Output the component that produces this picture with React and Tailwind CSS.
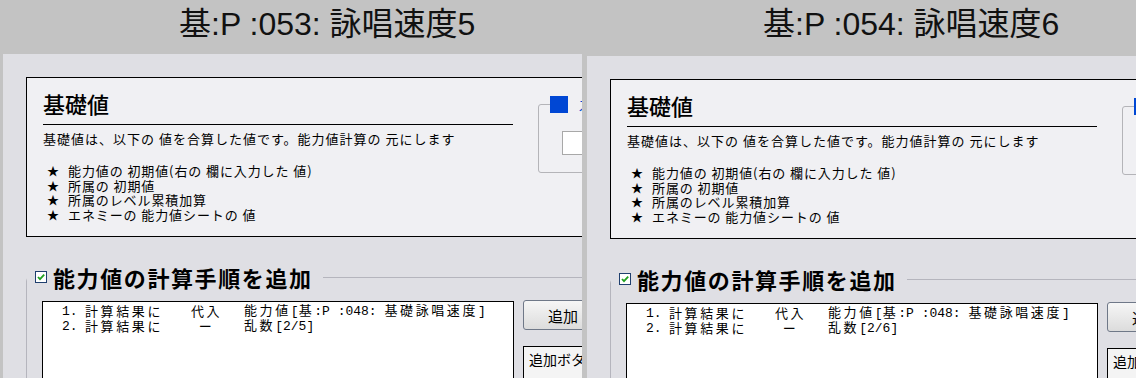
import React from "react";

const JP = "font-['Noto_Sans_CJK_JP',sans-serif]";

// split a string into ascii / wide runs so the list box looks fixed-width
function Mono({ text }) {
  const runs = [];
  for (const ch of text) {
    const ascii = ch.charCodeAt(0) < 128;
    const last = runs[runs.length - 1];
    if (last && last.ascii === ascii) last.s += ch;
    else runs.push({ ascii, s: ch });
  }
  return runs.map((r, i) =>
    r.ascii ? (
      <span key={i} className="font-['Liberation_Mono',monospace] whitespace-pre">
        {r.s}
      </span>
    ) : (
      <span key={i} className="tracking-[2.6px]">
        {r.s}
      </span>
    )
  );
}

function Step({ num, target, op, value }) {
  return (
    <div className="flex h-[15px] items-center whitespace-nowrap pl-[19px] text-[13px] leading-[15px]">
      <span className="w-[23px] shrink-0">
        <Mono text={num} />
      </span>
      <span className="w-[104px] shrink-0">
        <Mono text={target} />
      </span>
      <span className="w-[33px] shrink-0 pl-[2px] text-center">
        <Mono text={op} />
      </span>
      <span className="ml-[22px]">
        <Mono text={value} />
      </span>
    </div>
  );
}

function CheckBox() {
  return (
    <svg width="12" height="12" viewBox="0 0 12 12" className="shrink-0">
      <rect x="0.5" y="0.5" width="11" height="11" fill="#fff" stroke="#1f3f6e" />
      <path d="M3 6 L5 8.2 L9.2 3.6" fill="none" stroke="#21a121" strokeWidth="1.8" />
    </svg>
  );
}

function Panel({ title, max, titleH }) {
  return (
    <div className="flex h-full flex-col">
      <div className={`${titleH} shrink-0 pt-[8px]`}>
        <div className="pl-[176px] whitespace-nowrap text-[32px] leading-[32px] text-[#111] font-['Liberation_Sans','Noto_Sans_CJK_JP',sans-serif]">
          {title}
        </div>
      </div>
      <div className={`flex-1 overflow-hidden bg-[#dfdfe4] pl-[23px] pt-[23px] text-black ${JP}`}>
        {/* 基礎値 box */}
        <div className="flex h-[160px] w-[640px] border border-black bg-[#f0f0f3]">
          <div className="ml-[16px] w-[470px] shrink-0">
            <div className="border-b border-black pb-[8px] pt-[12px] text-[22px] font-medium leading-[26px]">
              基礎値
            </div>
            <p className="mt-[6px] whitespace-nowrap text-[13px] leading-[15px] tracking-[1px]">
              基礎値は、以下の 値を合算した値です。能力値計算の 元にします
            </p>
            <ul className="mt-[18px] text-[13px] leading-[14.5px]">
              {[
                "能力値の 初期値(右の 欄に入力した 値)",
                "所属の 初期値",
                "所属のレベル累積加算",
                "エネミーの 能力値シートの 値",
              ].map((t) => (
                <li key={t} className="flex whitespace-nowrap">
                  <span className="ml-[4px] w-[21px] text-[12px]">★</span>
                  <span className="tracking-[0.9px]">{t}</span>
                </li>
              ))}
            </ul>
          </div>
          <fieldset className="ml-[25px] mt-[18px] h-[77px] w-[120px] shrink-0 rounded-[3px] border border-[#b4b4b8]">
            <legend className="ml-[11px] flex items-center pr-[4px]">
              <span className="block h-[17px] w-[18px] bg-[#0047d4]" />
              <span className="ml-[10px] text-[13px] leading-[17px] text-[#0047d4]">スキル</span>
            </legend>
            <div className="ml-[23px] mt-[18px] h-[24px] w-[90px] border border-[#a8a8a8] bg-white" />
          </fieldset>
        </div>

        {/* 計算手順 */}
        <fieldset className="mt-[26px] w-[640px] rounded-tl-[4px] border border-[#b5b5bd] pb-[40px]">
          <legend className="flex items-center pl-[8px] pr-[10px]">
            <CheckBox />
            <span className="ml-[6px] text-[22px] font-bold leading-[28px] tracking-[1.6px]">
              能力値の計算手順を追加
            </span>
          </legend>
          <div className="flex items-start">
            <div className="ml-[15px] mt-[10px] h-[100px] w-[472px] shrink-0 border border-black bg-white pt-[1px]">
              <Step num="1." target="計算結果に" op="代入" value="能力値[基:P :048: 基礎詠唱速度]" />
              <Step num="2." target="計算結果に" op="ー" value={`乱数[2/${max}]`} />
            </div>
            <div className="ml-[9px] mt-[9px] shrink-0">
              <button className="flex h-[30px] w-[80px] items-center justify-center rounded-[3px] border border-[#6f7888] bg-gradient-to-b from-[#f6f6f6] to-[#dcdcdc] text-[15px] leading-none">
                追加
              </button>
              <div className="mt-[16px] h-[40px] w-[120px] border border-black bg-[#f4f4f4] pl-[5px] pt-[3px] text-[14px] leading-[18px] whitespace-nowrap">
                追加ボタンを押すと
              </div>
            </div>
          </div>
        </fieldset>
      </div>
    </div>
  );
}

export default function App() {
  return (
    <div className="flex h-[378px] w-[1136px] overflow-hidden bg-[#c3c3c3] pl-[3px]">
      <div className="h-full w-[579px] shrink-0">
        <Panel title="基:P :053: 詠唱速度5" max={5} titleH="h-[54px]" />
      </div>
      <div className="ml-[5px] h-full min-w-0 flex-1">
        <Panel title="基:P :054: 詠唱速度6" max={6} titleH="h-[56px]" />
      </div>
    </div>
  );
}
